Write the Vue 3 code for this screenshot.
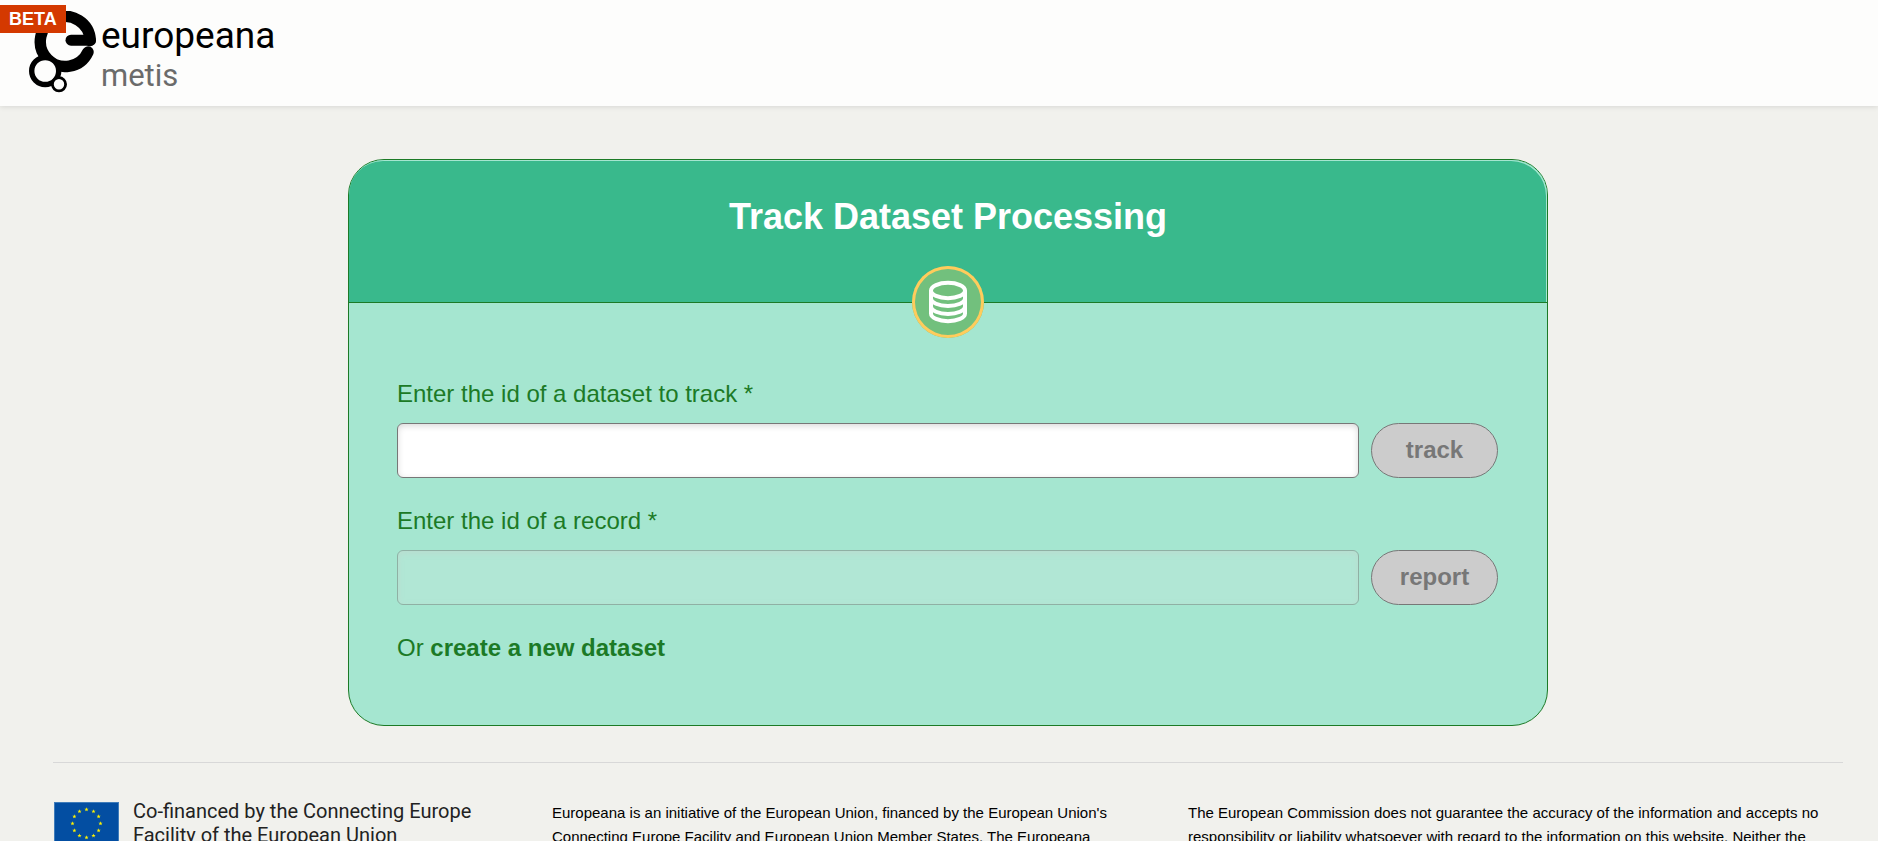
<script setup>
import { ref } from 'vue'

const datasetId = ref('')
const recordId = ref('')

const starPath = (cx, cy) => {
  const points = []
  for (let i = 0; i < 10; i++) {
    const radius = i % 2 ? 0.9 : 2.2
    const angle = (Math.PI / 5) * i - Math.PI / 2
    points.push(`${(cx + radius * Math.cos(angle)).toFixed(2)},${(cy + radius * Math.sin(angle)).toFixed(2)}`)
  }
  return points.join(' ')
}

const stars = Array.from({ length: 12 }, (_, i) => {
  const angle = (Math.PI / 6) * i
  return starPath(32.5 + 14 * Math.cos(angle), 21.5 + 14 * Math.sin(angle))
})
</script>

<template>
  <div class="page">
    <header class="top-bar">
      <a class="brand" href="#">
        <svg class="brand-mark" viewBox="29 11 68 82" aria-hidden="true">
          <g fill="none" stroke="#000">
            <path d="M88 52A25 25 0 1 1 90.3 40.5" stroke-width="11.4" stroke-linecap="round" />
            <path d="M71 40.2H90.4" stroke-width="11" stroke-linecap="round" />
          </g>
          <circle cx="45.2" cy="71" r="13.5" fill="#fdfdfc" stroke="#000" stroke-width="5.4" />
          <circle cx="59" cy="84.3" r="6.6" fill="#fdfdfc" stroke="#000" stroke-width="2.8" />
        </svg>
        <span class="brand-text">
          <span class="brand-name">europeana</span>
          <span class="brand-sub">metis</span>
        </span>
      </a>
      <span class="beta">BETA</span>
    </header>

    <main class="content">
      <section class="card">
        <div class="card-head">
          <h1>Track Dataset Processing</h1>
          <span class="orb">
            <svg viewBox="0 0 72 72" aria-hidden="true">
              <g fill="none" stroke="#fff" stroke-width="4">
                <ellipse cx="36" cy="24.5" rx="17" ry="7.7" />
                <path d="M19 24.5V47.4A17 7.8 0 0 0 53 47.4V24.5" />
                <path d="M19 32.2A17 7.8 0 0 0 53 32.2" />
                <path d="M19 40.2A17 7.8 0 0 0 53 40.2" />
              </g>
            </svg>
          </span>
        </div>
        <form class="card-body" @submit.prevent>
          <div class="field">
            <label for="dataset-id">Enter the id of a dataset to track *</label>
            <div class="row">
              <input id="dataset-id" v-model="datasetId" type="text" />
              <button type="submit" disabled>track</button>
            </div>
          </div>
          <div class="field">
            <label for="record-id">Enter the id of a record *</label>
            <div class="row">
              <input id="record-id" v-model="recordId" type="text" disabled />
              <button type="submit" disabled>report</button>
            </div>
          </div>
          <p class="create">Or <a href="#">create a new dataset</a></p>
        </form>
      </section>
    </main>

    <footer class="footer">
      <div class="funding">
        <svg class="flag" viewBox="0 0 65 43" aria-hidden="true">
          <rect width="65" height="43" fill="#3f7cba" />
          <rect x="1" y="1" width="63" height="41" fill="#034ea2" />
          <polygon v-for="(points, i) in stars" :key="i" :points="points" fill="#fff200" />
        </svg>
        <p>Co-financed by the Connecting Europe<br />Facility of the European Union</p>
      </div>
      <p class="note">
        Europeana is an initiative of the European Union, financed by the European Union's<br />
        Connecting Europe Facility and European Union Member States. The Europeana
      </p>
      <p class="note">
        The European Commission does not guarantee the accuracy of the information and accepts no<br />
        responsibility or liability whatsoever with regard to the information on this website. Neither the
      </p>
    </footer>
  </div>
</template>

<style>
body {
  background: #f1f1ed;
}
</style>

<style scoped>
.page {
  height: 100vh;
  overflow: hidden;
  background: #f1f1ed;
  font-family: "Liberation Sans", Arial, sans-serif;
  color: #000;
}

.page * {
  box-sizing: border-box;
}

.top-bar {
  position: relative;
  height: 106px;
  padding: 11px 29px;
  background: #fdfdfc;
  box-shadow: 0 0 6px rgba(0, 0, 0, 0.14);
}

.brand {
  display: flex;
  width: max-content;
  gap: 4px;
  color: #000;
  text-decoration: none;
  font-family: Roboto, sans-serif;
}

.brand-mark {
  display: block;
  width: 68px;
  height: 82px;
}

.brand-text {
  display: flex;
  flex-direction: column;
}

.brand-name {
  font-size: 37px;
  line-height: 50px;
}

.brand-sub {
  font-size: 31px;
  line-height: 30px;
  color: #6b6b6b;
}

.beta {
  position: absolute;
  left: 0;
  top: 5px;
  padding: 0 9px;
  background: #d43900;
  color: #fff;
  font-size: 18px;
  font-weight: bold;
  line-height: 28px;
}

.content {
  padding: 53px 35px 0 53px;
}

.card {
  max-width: 1200px;
  margin: 0 auto;
  border: 1px solid #1c7a26;
  border-radius: 36px;
  background: #a5e6d0;
}

.card-head {
  position: relative;
  height: 143px;
  padding-top: 36px;
  border-bottom: 1px solid #1c7a26;
  border-radius: 35px 35px 0 0;
  background: #39b98c;
  box-shadow: inset -1px 1px 0 #a5e6d0;
}

.card-head h1 {
  margin: 0;
  color: #fff;
  font-size: 36px;
  line-height: 42px;
  text-align: center;
}

.orb {
  position: absolute;
  left: 50%;
  bottom: -36px;
  width: 72px;
  height: 72px;
  margin-left: -36px;
  border-radius: 50%;
  background: #72c07d;
  box-shadow: inset 0 0 0 3px #ffcc5c;
}

.orb svg {
  display: block;
}

.card-body {
  padding: 77px 49px 63px 48px;
  color: #1c7a26;
  font-size: 24px;
  line-height: 28px;
}

.field {
  margin-bottom: 29px;
}

.field label {
  display: block;
  margin-bottom: 15px;
}

.row {
  display: flex;
  gap: 12px;
}

.row input {
  flex: 1;
  min-width: 0;
  height: 55px;
  padding: 0 12px;
  border: 1px solid #777;
  border-radius: 6px;
  background: #fff;
  box-shadow: inset 0 2px 6px rgba(0, 0, 0, 0.15);
  font: inherit;
}

.row input:disabled {
  border-color: #8fb0a4;
  background: #b1e7d5;
  box-shadow: inset 0 2px 6px rgba(190, 215, 205, 0.7);
}

.row button {
  width: 127px;
  height: 55px;
  padding: 0 0 2px;
  border: 1px solid #777;
  border-radius: 28px;
  background: #ccc;
  color: #777;
  font: inherit;
  font-weight: bold;
}

.create {
  margin: 0;
}

.create a {
  color: inherit;
  font-weight: bold;
  text-decoration: none;
}

.footer {
  display: grid;
  grid-template-columns: 499fr 636fr 655fr;
  margin: 36px 35px 0 53px;
  padding-top: 36px;
  border-top: 1px solid #d8d8d8;
}

.footer p {
  margin: 0;
  line-height: 24px;
  white-space: nowrap;
}

.funding {
  display: flex;
  gap: 14px;
  padding-left: 1px;
  color: #222;
  font-family: Roboto, sans-serif;
  font-size: 20px;
}

.flag {
  width: 65px;
  height: 43px;
  margin-top: 3px;
}

.note {
  padding-top: 2px;
  font-size: 15px;
}
</style>
